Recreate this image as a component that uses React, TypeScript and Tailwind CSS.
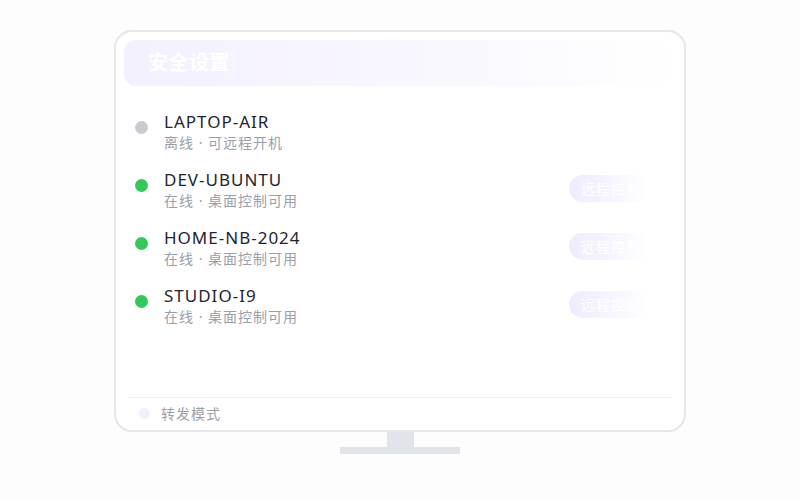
const DEVICES = [
  { name: 'LAPTOP-AIR', status: '离线 · 可远程开机', online: false },
  { name: 'DEV-UBUNTU', status: '在线 · 桌面控制可用', online: true },
  { name: 'HOME-NB-2024', status: '在线 · 桌面控制可用', online: true },
  { name: 'STUDIO-I9', status: '在线 · 桌面控制可用', online: true },
];

function DeviceRow({ name, status, online }: { name: string; status: string; online: boolean }) {
  return (
    <div className="flex items-start h-[58px] pl-[11px] pr-[27px]">
      <span
        className={`mt-[10px] w-[13px] h-[13px] rounded-full shrink-0 ${online ? 'bg-[#34c759]' : 'bg-[#c9cbd3]'}`}
      />
      <div className="ml-[16px] flex flex-col">
        <span className="text-[17px] leading-[22px] text-[#1f2430] tracking-[1px]">{name}</span>
        <span className="text-[14px] leading-[20px] text-[#9aa0aa] tracking-[1px]">{status}</span>
      </div>
      {online && (
        <div className="ml-auto mt-[6px] w-[80px] h-[27px] rounded-full bg-gradient-to-r from-[#efebfe] via-[#f6f4ff] to-white/0 flex items-center pl-[12px] overflow-hidden">
          <span className="text-[14px] text-white whitespace-nowrap tracking-[1px]">远程控制</span>
        </div>
      )}
    </div>
  );
}

export default function App() {
  return (
    <div
      className="w-[800px] h-[500px] bg-[#fdfdfd] flex flex-col items-center pt-[30px]"
      style={{ fontFamily: '"Noto Sans", "Noto Sans CJK SC", sans-serif' }}
    >
      {/* Screen */}
      <div className="w-[572px] h-[402px] border-2 border-[#e6e7ea] rounded-[18px] bg-white flex flex-col pt-[8px] px-[8px]">
        <div className="h-[46px] rounded-[12px] bg-gradient-to-r from-[#f4f1ff] via-[#f8f6ff] to-white flex items-center pl-[24px]">
          <span className="text-[20px] font-bold text-white tracking-[0.5px]">安全设置</span>
        </div>

        <div className="flex-1 pt-[25px]">
          {DEVICES.map((d) => (
            <DeviceRow key={d.name} {...d} />
          ))}
        </div>

        <div className="mx-[3px] border-t border-[#eef0f3] h-[33px] flex items-center pl-[12px] pb-[2px]">
          <span className="w-[11px] h-[11px] rounded-full bg-[#f1eefd]" />
          <span className="ml-[11px] text-[14px] text-[#9aa0aa] tracking-[1px]">转发模式</span>
        </div>
      </div>

      {/* Stand */}
      <div className="w-[27px] h-[15px] bg-[#e1e5e9]" />
      <div className="w-[120px] h-[7px] bg-[#e1e5e9]" />
    </div>
  );
}
